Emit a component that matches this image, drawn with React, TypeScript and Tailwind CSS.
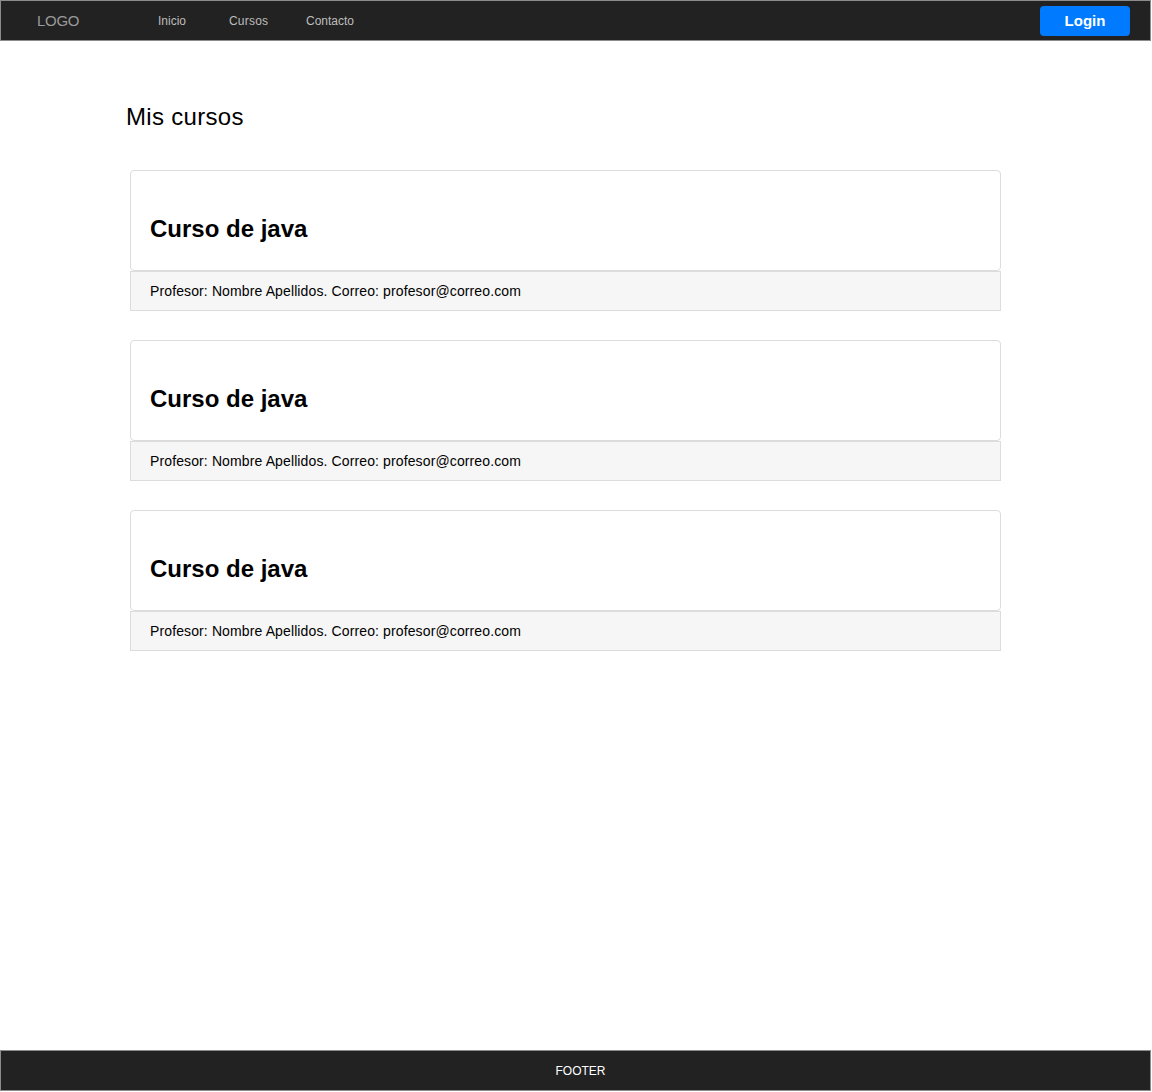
const courses = [
  { id: 1, title: 'Curso de java', teacher: 'Nombre Apellidos', email: 'profesor@correo.com' },
  { id: 2, title: 'Curso de java', teacher: 'Nombre Apellidos', email: 'profesor@correo.com' },
  { id: 3, title: 'Curso de java', teacher: 'Nombre Apellidos', email: 'profesor@correo.com' },
];

const CourseCard = ({ title, teacher, email }: { title: string; teacher: string; email: string }) => (
  <div className="mb-[29px] w-[871px]">
    <div className="h-[101px] rounded-[4px] border border-[#dcdcdc] bg-white px-[19px] pt-[44px]">
      <h2 className="text-[24px] font-bold leading-[28px] text-black">{title}</h2>
    </div>
    <div className="flex h-[40px] items-center border border-[#dcdcdc] bg-[#f6f6f6] px-[19px] text-[14px] tracking-[0.12px] text-black">
      Profesor: {teacher}. Correo: {email}
    </div>
  </div>
);

export default function App() {
  return (
    <div className="flex min-h-[1092px] w-[1152px] flex-col bg-white font-['Liberation_Sans',Arial,sans-serif]">
      <header className="flex h-[41px] w-[1151px] items-center border border-[#8c8c8c] bg-[#222222]">
        <span className="ml-[36px] w-[121px] pt-[2px] text-[15px] tracking-[-0.3px] text-[#9a9a9a]">LOGO</span>
        <nav className="flex items-center text-[12px] text-[#bdbdbd]">
          <a href="#" className="w-[71px]">Inicio</a>
          <a href="#" className="w-[77px] tracking-[0.2px]">Cursos</a>
          <a href="#">Contacto</a>
        </nav>
        <button className="ml-auto mr-[20px] h-[30px] w-[90px] rounded-[4px] bg-[#007bff] pt-[2px] text-[15px] font-bold text-white">
          Login
        </button>
      </header>

      <main className="flex-1 pl-[126px] pt-[60px]">
        <h1 className="text-[24px] leading-[32px] tracking-[0.3px] text-black">Mis cursos</h1>
        <div className="ml-[4px] mt-[37px]">
          {courses.map((c) => (
            <CourseCard key={c.id} title={c.title} teacher={c.teacher} email={c.email} />
          ))}
        </div>
      </main>

      <footer className="mb-[1px] flex h-[41px] w-[1151px] items-center justify-center border border-[#8c8c8c] bg-[#222222] pl-[10px] text-[12px] text-white">
        FOOTER
      </footer>
    </div>
  );
}
